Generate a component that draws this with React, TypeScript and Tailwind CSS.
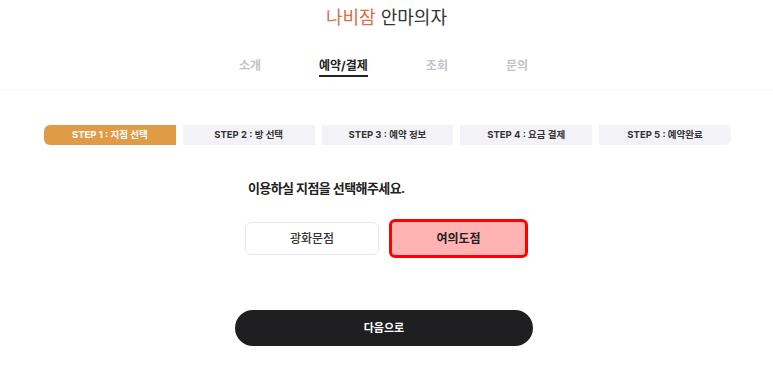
import { useState } from "react";

const navItems = ["소개", "예약/결제", "조회", "문의"];
const steps = ["STEP 1 : 지점 선택", "STEP 2 : 방 선택", "STEP 3 : 예약 정보", "STEP 4 : 요금 결제", "STEP 5 : 예약완료"];
const branches = ["광화문점", "여의도점"];

export default function App() {
  const [branch, setBranch] = useState("여의도점");

  return (
    <div className="min-h-screen bg-white font-['Inter','Noto_Sans_CJK_KR',sans-serif] text-[#222]">
      <header className="border-b border-[#f7f7f8] pb-[12px]">
        <h1 className="pt-[5px] text-center text-[18px] leading-[26px] font-normal">
          <span className="text-[#d2714b]">나비잠</span> <span className="text-[#333]">안마의자</span>
        </h1>

        <nav className="mt-[26px] flex justify-center gap-[58px] pr-[6px]">
          {navItems.map((item) => {
            const active = item === "예약/결제";
            return (
              <a
                key={item}
                className={
                  active
                    ? "border-b-2 border-[#222] text-[12px] leading-[18px] font-bold text-[#222]"
                    : "pb-[2px] text-[12px] leading-[18px] font-bold text-[#c4c4c8]"
                }
              >
                {item}
              </a>
            );
          })}
        </nav>
      </header>

      <ol className="mx-auto mt-[35px] flex w-[687px] translate-x-[1px] gap-[7px] overflow-hidden rounded-[6px]">
        {steps.map((step, i) => (
          <li
            key={step}
            className={
              i === 0
                ? "flex h-[20px] flex-1 items-center justify-center bg-[#e09b46] text-[9.5px] font-bold text-white"
                : "flex h-[20px] flex-1 items-center justify-center bg-[#f3f3f7] text-[9.5px] font-bold text-[#333]"
            }
          >
            {step}
          </li>
        ))}
      </ol>

      <div className="mx-auto w-[283px]">
        <p className="mt-[33px] pl-[3px] text-[13px] leading-[20px] font-semibold tracking-[-0.6px] text-[#222]">
          이용하실 지점을 선택해주세요.
        </p>

        <div className="mt-[21px] flex items-center gap-[10px]">
          {branches.map((name) => {
            const selected = name === branch;
            return (
              <button
                key={name}
                type="button"
                onClick={() => setBranch(name)}
                className={
                  selected
                    ? "h-[39px] w-[139px] rounded-[6px] border-[3px] border-[#ff0000] bg-[#ffb3b3] text-[12px] font-bold text-[#222]"
                    : "h-[33px] w-[134px] rounded-[6px] border border-[#e6e6ee] bg-white text-[12px] font-medium text-[#333]"
                }
              >
                {name}
              </button>
            );
          })}
        </div>
      </div>

      <div className="mt-[52px] flex justify-center pr-[5px]">
        <button
          type="button"
          className="h-[36px] w-[298px] rounded-full bg-[#1f1f21] text-[11px] font-bold text-white"
        >
          다음으로
        </button>
      </div>
    </div>
  );
}
